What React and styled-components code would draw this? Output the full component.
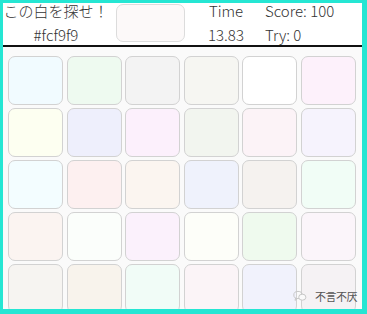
import React from 'react'
import styled, { createGlobalStyle } from 'styled-components'

const GlobalStyle = createGlobalStyle`
  html, body {
    margin: 0;
    padding: 0;
    background: #fff;
  }
  * {
    box-sizing: border-box;
  }
`

const colors = [
  ['#f1fbff', '#eefaf0', '#f3f3f3', '#f6f6f2', '#ffffff', '#fdf1fb'],
  ['#fdfff1', '#eeeffc', '#fcf0fc', '#f2f5ef', '#fcf3f7', '#f6f3fd'],
  ['#f3fdff', '#fdf0f0', '#fbf5f0', '#eff2fc', '#f5f2ef', '#f1fdf6'],
  ['#fbf4f1', '#fbfefb', '#fbf1fc', '#fdfef9', '#effaee', '#fbf5fa'],
  ['#f6f4f1', '#f8f3ec', '#f1fcf7', '#fbf4f7', '#f1f2fc', '#f5f2f4'],
]

const Frame = styled.div`
  position: relative;
  width: 367px;
  height: 314px;
  border-style: solid;
  border-color: #25e6d3;
  border-width: 3px 5px 5px 3px;
  background: #fafafa;
  overflow: hidden;
  font-family: "Noto Sans CJK JP", "Noto Sans", sans-serif;
  color: #333;
`

const Header = styled.div`
  display: flex;
  height: 44px;
  background: #fff;
  border-bottom: 2px solid #111;
`

const InfoCol = styled.div`
  width: ${p => p.$width};
  margin-top: -4px;
  display: flex;
  flex-direction: column;
  align-items: ${p => (p.$center ? 'center' : 'flex-start')};
  font-size: 15px;
  line-height: 24px;
  font-weight: 300;
  white-space: nowrap;
`

const Target = styled.div`
  width: 69px;
  height: 38px;
  margin: 1px 2px 0 7px;
  border: 1px solid #dcdcdc;
  border-radius: 7px;
  background: ${p => p.color};
`

const Board = styled.div`
  display: grid;
  grid-template-columns: repeat(6, 55px);
  grid-auto-rows: 49px;
  column-gap: 3.5px;
  row-gap: 3px;
  padding: 9px 0 0 5px;
`

const Tile = styled.div`
  border: 1px solid #d2d2d2;
  border-radius: 7px;
  background: ${p => p.color};
`

const Watermark = styled.div`
  position: absolute;
  left: 290px;
  top: 285px;
  display: flex;
  align-items: center;
  gap: 8px;
  font-size: 11px;
  color: #555;

  span {
    letter-spacing: -0.5px;
  }
`

const App = () => {
  return (
    <>
      <GlobalStyle />
      <Frame>
        <Header>
          <InfoCol $width="106px" $center>
            <div>この白を探せ！</div>
            <div>#fcf9f9</div>
          </InfoCol>
          <Target color="#fcf9f9" />
          <InfoCol $width="78px" $center>
            <div>Time</div>
            <div>13.83</div>
          </InfoCol>
          <InfoCol $width="90px">
            <div>Score: 100</div>
            <div>Try: 0</div>
          </InfoCol>
        </Header>
        <Board>
          {colors.flat().map((c, i) => (
            <Tile key={i} color={c} />
          ))}
        </Board>
        <Watermark>
          <svg width="14" height="12" viewBox="0 0 14 12" fill="none" stroke="#c8c8c8" strokeWidth="1">
            <ellipse cx="5" cy="5" rx="4.2" ry="3.6" />
            <ellipse cx="9.3" cy="7.2" rx="3.6" ry="3" fill="#fafafa" />
            <path d="M2.6 8 L2 10.4 L4.4 8.6" />
          </svg>
          <span>不言不厌</span>
        </Watermark>
      </Frame>
    </>
  )
}

export default App
